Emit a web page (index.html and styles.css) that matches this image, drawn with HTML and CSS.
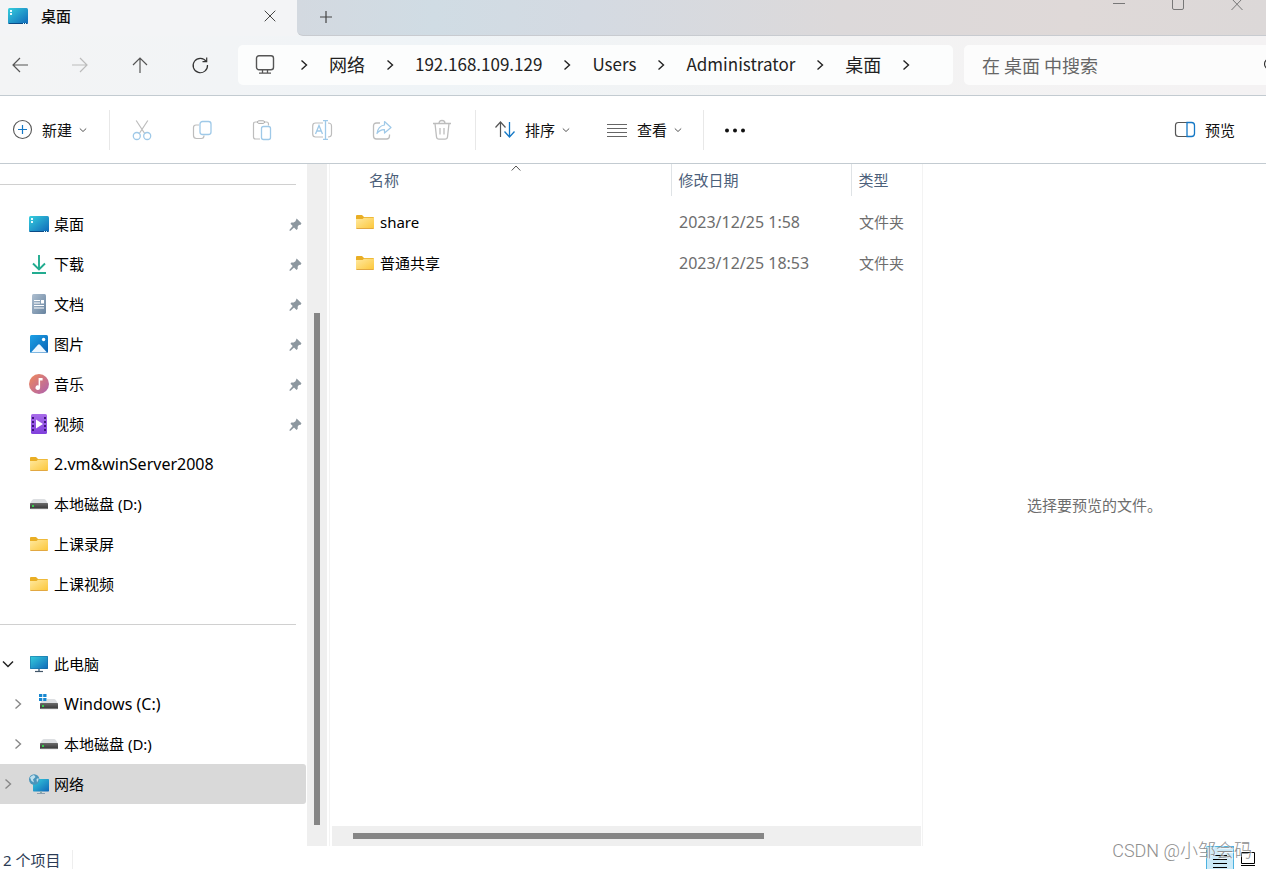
FILE: index.html
```html
<!DOCTYPE html>
<html lang="zh-CN">
<head>
<meta charset="utf-8">
<title>桌面</title>
<link rel="stylesheet" href="styles.css">
</head>
<body>
<svg class="defs" aria-hidden="true">
  <defs>
    <linearGradient id="g-desk" x1="0" y1="0" x2="1" y2="1"><stop offset="0" stop-color="#36cfdd"/><stop offset="1" stop-color="#0f67b9"/></linearGradient>
    <linearGradient id="g-doc" x1="0" y1="0" x2="1" y2="1"><stop offset="0" stop-color="#aebfd0"/><stop offset="1" stop-color="#67839f"/></linearGradient>
    <linearGradient id="g-pic" x1="0" y1="0" x2="1" y2="1"><stop offset="0" stop-color="#1da1e6"/><stop offset="1" stop-color="#0a62b4"/></linearGradient>
    <linearGradient id="g-music" x1="0" y1="0" x2="1" y2="1"><stop offset="0" stop-color="#f08a5a"/><stop offset="1" stop-color="#ac60b0"/></linearGradient>
    <linearGradient id="g-video" x1="0" y1="0" x2="0" y2="1"><stop offset="0" stop-color="#a86cea"/><stop offset="1" stop-color="#8040dc"/></linearGradient>
    <linearGradient id="g-folder" x1="0" y1="0" x2="1" y2="1"><stop offset="0" stop-color="#ffe9a0"/><stop offset="1" stop-color="#fcc638"/></linearGradient>
    <linearGradient id="g-disk" x1="0" y1="0" x2="0" y2="1"><stop offset="0" stop-color="#6a6a6a"/><stop offset="1" stop-color="#333"/></linearGradient>
  </defs>
  <symbol id="desktop" viewBox="0 0 20 20"><rect y="2" width="20" height="16" rx="1.5" fill="url(#g-desk)"/><path d="M.3 17h19.4q-.3 1-1.4 1H1.700q-1.100 0-1.400-1z" fill="#0b4a86"/><path d="M2 4h2v2H2zM2 7h2v2H2z" fill="#e8fbff"/><path d="M15 17h1v1h-1zM17 17h1v1h-1z" fill="#dff"/></symbol>
  <symbol id="download" viewBox="0 0 20 20"><path d="M10 1v14M4 9.500l6 6 6-6M3 19h14" fill="none" stroke="#22ac90" stroke-width="1.900"/></symbol>
  <symbol id="document" viewBox="0 0 20 20"><rect x="3" width="14" height="20" rx="1.500" fill="url(#g-doc)"/><path d="M5 6.500h6M5 9h6M5 11.500h10M5 14h10" stroke="#fff" stroke-width="1"/><path d="M12 6h3v3.500h-3z" fill="#fff"/></symbol>
  <symbol id="picture" viewBox="0 0 20 20"><rect x="1" y="1" width="18" height="18" rx="1.500" fill="url(#g-pic)"/><path d="M2 18.600l7-7.800q1-1 2 0l7 7.800z" fill="#edf7ff"/><circle cx="14.600" cy="5.500" r="1.700" fill="#fff"/></symbol>
  <symbol id="music" viewBox="0 0 20 20"><circle cx="10" cy="10" r="10" fill="url(#g-music)"/><path d="M9.600 4h4v2.500h-2.500v7.200a2.300 2.300 0 1 1-1.500-2.200z" fill="#fff"/></symbol>
  <symbol id="video" viewBox="0 0 20 20"><rect x="2" width="16" height="20" rx="1.500" fill="url(#g-video)"/><path d="M4 3v16M16 3v16" stroke="#40167c" stroke-width="2" stroke-dasharray="2 2"/><path d="M7 5.500v9l7-4.500z" fill="#fff"/></symbol>
  <symbol id="folder" viewBox="0 0 20 20"><path d="M1 4q0-1 1-1h5l2 2h9q1 0 1 1v3H1z" fill="#e9ae25"/><path d="M1 7h6.500L9 5.700h10V16q0 1-1 1H2q-1 0-1-1z" fill="url(#g-folder)"/><path d="M1.500 16.500h17" stroke="#e2a842"/></symbol>
  <symbol id="disk" viewBox="0 0 20 20"><path d="M1 10q2-5 4-5h10q2 0 4 5z" fill="#dcdee1"/><rect x="1" y="9" width="18" height="6" rx=".7" fill="url(#g-disk)"/><path d="M1.500 14.700h17" stroke="#999" stroke-width=".8"/><rect x="3" y="11" width="2" height="2" fill="#35d04a"/></symbol>
  <symbol id="windisk" viewBox="0 0 20 20"><path d="M1 10q2-5 4-5h10q2 0 4 5z" fill="#dcdee1"/><rect x="1" y="9" width="18" height="6" rx=".7" fill="url(#g-disk)"/><path d="M1.500 14.700h17" stroke="#999" stroke-width=".8"/><rect x="3" y="11" width="2" height="2" fill="#35d04a"/><path d="M0 0h8v7H0z" fill="#fff"/><path d="M0 0h3.300v3H0zM4.200 0h3.300v3H4.200zM0 4h3.300v3H0zM4.200 4h3.300v3H4.200z" fill="#1787d0"/></symbol>
  <symbol id="computer" viewBox="0 0 20 20"><rect x="1" y="2" width="18" height="13" rx=".7" fill="url(#g-desk)"/><rect x="1.500" y="2.500" width="17" height="12" fill="none" stroke="#176a9e" stroke-opacity=".5"/><path d="M9 15h2v2.500H9z" fill="#7892a5"/><path d="M6 17.500h8" stroke="#435668" stroke-width="1.200"/></symbol>
  <symbol id="network" viewBox="0 0 20 20"><rect x="4" y="5" width="16" height="12.500" rx=".7" fill="url(#g-desk)"/><path d="M11 17.500h2v2h-2z" fill="#8aa"/><path d="M8 19.500h8" stroke="#8b9fb0"/><circle cx="5.200" cy="5.500" r="5.200" fill="#4a95bb"/><path d="M1 3.500q2-2.500 4-2.500L6.500 3 4 5.500 5 8.500 2.500 7zM7.500 5l2-1q.6 2-1.500 4.500z" fill="#bfe0ee"/></symbol>
  <symbol id="pin" viewBox="0 0 14 14"><path d="M8.200.6l5.200 5-.8 1.700-2 .3-1.300 1.800.1 2.300-1.300 1.200-2.700-2.700L1.700 13.600.500 13.700l.1-1.100L4 8.700 1.600 6.200l1-1.400 2.400.100L7 3.400z" fill="#8c979f"/></symbol>
  <symbol id="chev-r" viewBox="0 0 10 12"><path d="M2.500 1.500L7.500 6l-5 4.500" fill="none" stroke="currentColor" stroke-width="1.400"/></symbol>
  <symbol id="chev-d" viewBox="0 0 12 12"><path d="M1 3.500l5 5 5-5" fill="none" stroke="currentColor" stroke-width="1.500"/></symbol>
  <symbol id="chev-s" viewBox="0 0 8 8"><path d="M.8 2.500L4 5.500l3.200-3" fill="none" stroke="#555" stroke-width="1"/></symbol>
</svg>

<div class="window">
  <header class="chrome">
    <div class="tabs">
      <div class="tab">
        <svg class="ic"><use href="#desktop"/></svg>
        <span class="tab-title">桌面</span>
        <button class="plain" aria-label="关闭标签页"><svg width="12" height="12" viewBox="0 0 12 12"><path d="M.7.700l10.600 10.600M11.300.700L.700 11.300" stroke="#444" stroke-width="1"/></svg></button>
      </div>
      <div class="strip">
        <button class="plain" aria-label="新建标签页"><svg width="14" height="14" viewBox="0 0 14 14"><path d="M7 1v12M1 7h12" stroke="#444" stroke-width="1.200"/></svg></button>
        <div class="caption">
          <button class="plain" aria-label="最小化"><svg width="12" height="11" viewBox="0 0 12 11"><path d="M0 3.500h12" stroke="#777"/></svg></button>
          <button class="plain" aria-label="最大化"><svg width="12" height="11" viewBox="0 0 12 11"><path d="M.5 0v8q0 1.500 1.500 1.500h8q1.500 0 1.500-1.500V0" fill="none" stroke="#777"/></svg></button>
          <button class="plain" aria-label="关闭"><svg width="12" height="11" viewBox="0 0 12 11"><path d="M.5-1.500l11 11.500M11.500-1.500L.5 10" stroke="#777"/></svg></button>
        </div>
      </div>
    </div>
    <div class="navbar">
      <div class="history">
        <button class="plain" aria-label="后退"><svg width="16" height="16" viewBox="0 0 16 16"><path d="M16 8H1M8 1L1 8l7 7" fill="none" stroke="#555" stroke-width="1.200"/></svg></button>
        <button class="plain" aria-label="前进"><svg width="16" height="16" viewBox="0 0 16 16"><path d="M0 8h15M8 1l7 7-7 7" fill="none" stroke="#bbb" stroke-width="1.200"/></svg></button>
        <button class="plain" aria-label="向上"><svg width="16" height="16" viewBox="0 0 16 16"><path d="M8 16V1M1 8l7-7 7 7" fill="none" stroke="#555" stroke-width="1.200"/></svg></button>
        <button class="plain" aria-label="刷新"><svg width="16" height="16" viewBox="0 0 16 16"><path d="M14.300 4.500A7.200 7.200 0 1 0 15.500 8M14.700.500V4.700H10.500" fill="none" stroke="#333" stroke-width="1.200"/></svg></button>
      </div>
      <nav class="address" aria-label="地址栏">
        <svg class="monitor" viewBox="0 0 20 20"><rect x="1.500" y=".7" width="17" height="14" rx="2.500" fill="none" stroke="#555" stroke-width="1.400"/><path d="M7.500 15v3M12.500 15v3M4 18.200h12" stroke="#555" stroke-width="1.300"/></svg>
        <svg class="sep"><use href="#chev-r"/></svg><a class="han" href="#">网络</a>
        <svg class="sep"><use href="#chev-r"/></svg><a href="#">192.168.109.129</a>
        <svg class="sep"><use href="#chev-r"/></svg><a href="#">Users</a>
        <svg class="sep"><use href="#chev-r"/></svg><a href="#">Administrator</a>
        <svg class="sep"><use href="#chev-r"/></svg><a class="han" href="#">桌面</a>
        <svg class="sep"><use href="#chev-r"/></svg>
      </nav>
      <div class="search">
        <input type="text" aria-label="搜索" placeholder="在 桌面 中搜索">
        <svg width="14" height="14" viewBox="0 0 14 14"><circle cx="5.500" cy="6" r="5" fill="none" stroke="#333" stroke-width="1.200"/></svg>
      </div>
    </div>
  </header>

  <div class="toolbar">
    <button class="cmd new"><svg class="ic" viewBox="0 0 20 20"><circle cx="10.500" cy="9.500" r="9" fill="none" stroke="#555" stroke-width="1.100"/><path d="M10.500 5v9M6 9.500h9" stroke="#1478c6" stroke-width="1.200"/></svg>新建<svg class="drop"><use href="#chev-s"/></svg></button>
    <span class="rule"></span>
    <div class="edit">
      <button class="plain" aria-label="剪切"><svg class="ic" viewBox="0 0 20 20"><path d="M4.200 0.500l8.800 13.500M15.800.500L7 14" stroke="#bdbdbd" stroke-width="1.200"/><g fill="none" stroke="#9fc9e8" stroke-width="1.300"><circle cx="4.800" cy="16" r="3.500"/><circle cx="15.200" cy="16" r="3.500"/></g></svg></button>
      <button class="plain" aria-label="复制"><svg class="ic" viewBox="0 0 20 20"><path d="M7 5H4Q1.500 5 1.500 7.500v8q0 3 3 3h5q2.500 0 2.500-3" fill="none" stroke="#bdbdbd" stroke-width="1.200"/><rect x="8" y="1.500" width="11" height="13" rx="2.500" fill="none" stroke="#9fc9e8" stroke-width="1.300"/></svg></button>
      <button class="plain" aria-label="粘贴"><svg class="ic" viewBox="0 0 20 20"><path d="M8 19H3.500Q1.500 19 1.500 17V4Q1.500 2 3.500 2H6M12 2h2.500q2 0 2 2v1.500" fill="none" stroke="#bdbdbd" stroke-width="1.200"/><rect x="5.500" y=".8" width="7" height="2.600" rx="1.300" fill="none" stroke="#aaa"/><rect x="9.500" y="6.500" width="9" height="13" rx="2" fill="#fff" stroke="#9fc9e8" stroke-width="1.300"/></svg></button>
      <button class="plain" aria-label="重命名"><svg class="ic" viewBox="0 0 20 20"><path d="M11 3H3.500Q.700 3 .700 6v8q0 3 2.800 3H11M16 3q3.500 0 3.500 3v8q0 3-3.500 3" fill="none" stroke="#bdbdbd" stroke-width="1.200"/><path d="M3.500 14L7 5.500l3.500 8.500M4.700 11h4.600M13.500 1v18M11 .700h5M11 19.300h5" fill="none" stroke="#9fc9e8" stroke-width="1.300"/></svg></button>
      <button class="plain" aria-label="共享"><svg class="ic" viewBox="0 0 20 20"><path d="M8 3H4.500Q1.500 3 1.500 6v10q0 3 3 3h10q3 0 3-3v-1.500" fill="none" stroke="#bdbdbd" stroke-width="1.300"/><path d="M12.500 1.500L19 7.500l-6.500 5.500V9.700Q8 9.500 5 13.500 6 6 12.500 5z" fill="none" stroke="#9fc9e8" stroke-width="1.200" stroke-linejoin="round"/></svg></button>
      <button class="plain" aria-label="删除"><svg class="ic" viewBox="0 0 20 20"><path d="M1 3.500h18M3 3.500l1.500 13.500q.3 2.200 2.500 2.200h6q2.200 0 2.500-2.200L17 3.500M7 3.500q0-3 3-3t3 3M8 8v6.500M12 8v6.500" fill="none" stroke="#bdbdbd" stroke-width="1.300"/></svg></button>
    </div>
    <span class="rule"></span>
    <button class="cmd"><svg class="ic" viewBox="0 0 20 20"><path d="M5.500 17V2M.5 7.500l5-5.500 5 5.500" fill="none" stroke="#555" stroke-width="1.200"/><path d="M14.500 2v15M9.500 11.500l5 5.500 5-5.500" fill="none" stroke="#1478c6" stroke-width="1.300"/></svg>排序<svg class="drop"><use href="#chev-s"/></svg></button>
    <button class="cmd"><svg class="ic" viewBox="0 0 20 20"><path d="M0 4.500h20M0 8.500h20M0 12.500h20M0 16.500h20" stroke="#666"/></svg>查看<svg class="drop"><use href="#chev-s"/></svg></button>
    <span class="rule"></span>
    <button class="plain more" aria-label="更多"><svg class="ic" viewBox="0 0 20 20"><g fill="#111"><circle cx="2" cy="10.500" r="2"/><circle cx="10" cy="10.500" r="2"/><circle cx="18" cy="10.500" r="2"/></g></svg></button>
    <button class="cmd preview-btn"><svg class="ic" viewBox="0 0 20 20"><path d="M12 2.500H3.500q-3 0-3 3v8q0 3 3 3H12" fill="none" stroke="#555" stroke-width="1.200"/><path d="M12 2.500h4.500q3 0 3 3v8q0 3-3 3H12z" fill="none" stroke="#1478c6" stroke-width="1.300"/></svg>预览</button>
  </div>

  <main class="panes">
    <nav class="tree" aria-label="导航窗格">
      <hr>
      <a class="node" href="#"><svg class="ic"><use href="#desktop"/></svg>桌面<svg class="pin"><use href="#pin"/></svg></a>
      <a class="node" href="#"><svg class="ic"><use href="#download"/></svg>下载<svg class="pin"><use href="#pin"/></svg></a>
      <a class="node" href="#"><svg class="ic"><use href="#document"/></svg>文档<svg class="pin"><use href="#pin"/></svg></a>
      <a class="node" href="#"><svg class="ic"><use href="#picture"/></svg>图片<svg class="pin"><use href="#pin"/></svg></a>
      <a class="node" href="#"><svg class="ic"><use href="#music"/></svg>音乐<svg class="pin"><use href="#pin"/></svg></a>
      <a class="node" href="#"><svg class="ic"><use href="#video"/></svg>视频<svg class="pin"><use href="#pin"/></svg></a>
      <a class="node latin" href="#"><svg class="ic"><use href="#folder"/></svg>2.vm&amp;winServer2008</a>
      <a class="node" href="#"><svg class="ic"><use href="#disk"/></svg>本地磁盘 (D:)</a>
      <a class="node" href="#"><svg class="ic"><use href="#folder"/></svg>上课录屏</a>
      <a class="node" href="#"><svg class="ic"><use href="#folder"/></svg>上课视频</a>
      <hr>
      <a class="node branch" href="#"><svg class="twist open"><use href="#chev-d"/></svg><svg class="ic"><use href="#computer"/></svg>此电脑</a>
      <a class="node branch child latin" href="#"><svg class="twist"><use href="#chev-r"/></svg><svg class="ic"><use href="#windisk"/></svg>Windows (C:)</a>
      <a class="node branch child" href="#"><svg class="twist"><use href="#chev-r"/></svg><svg class="ic"><use href="#disk"/></svg>本地磁盘 (D:)</a>
      <a class="node branch current" href="#"><svg class="twist"><use href="#chev-r"/></svg><svg class="ic"><use href="#network"/></svg>网络</a>
    </nav>
    <div class="vbar"><div class="vthumb"></div></div>
    <section class="files">
      <table>
        <colgroup><col class="c-name"><col class="c-date"><col></colgroup>
        <thead><tr><th class="name-head">名称<svg class="sort" width="10" height="6" viewBox="0 0 10 6"><path d="M.7 5.500L5 1l4.300 4.500" fill="none" stroke="#555"/></svg></th><th>修改日期</th><th>类型</th></tr></thead>
        <tbody>
          <tr><td><a class="file" href="#"><svg class="ic"><use href="#folder"/></svg>share</a></td><td class="latin">2023/12/25 1:58</td><td>文件夹</td></tr>
          <tr><td><a class="file" href="#"><svg class="ic"><use href="#folder"/></svg>普通共享</a></td><td class="latin">2023/12/25 18:53</td><td>文件夹</td></tr>
        </tbody>
      </table>
      <div class="hbar"><div class="hthumb"></div></div>
    </section>
    <aside class="preview">选择要预览的文件。</aside>
  </main>

  <footer class="status">
    <span class="count">2 个项目</span>
    <div class="views">
      <button class="view on" aria-label="详细信息"><svg width="16" height="20" viewBox="0 0 16 20"><path d="M1 8.500h14M1 12.500h14M1 16.500h14M1 20.500h14" stroke="#000"/></svg></button>
      <button class="view" aria-label="大图标"><svg width="16" height="20" viewBox="0 0 16 20"><path d="M1.500 6.500h13v11h-13zM1 19.500h14" fill="none" stroke="#000"/></svg></button>
      <span class="watermark">CSDN @小邹会码</span>
    </div>
  </footer>
</div>
</body>
</html>
```

FILE: styles.css
```css
* { box-sizing: border-box; }

body {
  margin: 0;
  background: #fff;
  color: #111;
  font: 15px/20px "Noto Sans", "Noto Sans CJK SC", sans-serif;
}

a { color: inherit; text-decoration: none; }

button {
  border: 0;
  background: none;
  color: inherit;
  font: inherit;
  padding: 0;
}

svg { display: block; flex: none; overflow: visible; }

.defs { position: absolute; width: 0; height: 0; }
.ic { width: 20px; height: 20px; }
.plain { display: flex; align-items: center; justify-content: center; }
.latin { font-size: 16px; }

.window {
  display: flex;
  flex-direction: column;
  height: 100vh;
  overflow: hidden;
}

/* Title bar and address row */
.chrome {
  background: linear-gradient(90deg, #f3f4f5 0%, #f2f4f6 18%, #eff4f7 34%, #f3f3f3 65%, #f4f2f3 100%);
  border-bottom: 1px solid #c3cbd1;
}

.tabs { display: flex; height: 36px; }

.tab {
  display: flex;
  align-items: center;
  width: 297px;
  padding: 0 21px 4px 8px;
  gap: 13px;
  background: #f3f4f6;
}

.tab-title { flex: 1; font-weight: 500; }

.strip {
  display: flex;
  flex: 1;
  align-items: center;
  justify-content: space-between;
  padding: 0 23px 2px 22px;
  border-bottom: 1px solid #c8cbd0;
  border-bottom-left-radius: 6px;
  background: linear-gradient(90deg, #d3d9e0 0%, #d0dce4 14%, #d4dae2 30%, #dcd9da 56%, #dfd9d8 80%, #dcd8d8 100%);
}

.caption { display: flex; align-self: flex-start; gap: 47px; }

.navbar { display: flex; align-items: center; height: 59px; padding-bottom: 1px; }
.history { display: flex; gap: 20px; }
.history .plain { width: 40px; height: 40px; }

.address {
  display: flex;
  flex: 1;
  align-items: center;
  height: 40px;
  margin: 0 11px 0 18px;
  padding-left: 17px;
  border-radius: 5px;
  background: #fcfdfd;
  color: #222;
  font: 17px/24px "Noto Sans CJK SC", sans-serif;
  white-space: nowrap;
}

.address a { padding-bottom: 2px; }
.han { font-size: 18px; }
.monitor { width: 20px; height: 20px; margin-right: 4px; }
.sep { width: 10px; height: 12px; margin: 0 20px; }

.search {
  display: flex;
  align-items: center;
  width: 302px;
  height: 40px;
  padding-left: 18px;
  border-radius: 5px 0 0 5px;
  background: #fcfcfc;
  overflow: hidden;
}

.search input {
  flex: none;
  width: 282px;
  padding: 0;
  border: 0;
  outline: 0;
  background: none;
  font: 18px/24px "Noto Sans CJK SC", sans-serif;
}

.search input::placeholder { color: #666; opacity: 1; }

/* Command bar */
.toolbar {
  display: flex;
  align-items: center;
  height: 68px;
  border-bottom: 1px solid #c3cbd1;
}

.cmd { display: flex; align-items: center; gap: 10px; width: 112px; padding-left: 19px; }
.new { width: 109px; padding-left: 12px; }
.drop { width: 8px; height: 8px; }
.cmd .drop { margin-left: -3px; }
.rule { width: 1px; height: 40px; background: #e8e8e8; }
.edit { display: flex; margin: 0 3px 0 2px; }
.edit .plain { width: 60px; height: 40px; }
.cmd + .rule { margin-left: 3px; }
.new + .rule { margin-left: 0; }
.more { margin-left: 21px; }
.preview-btn { width: auto; margin-left: auto; padding: 0 31px 0 0; }

/* Panes */
.panes { display: flex; flex: 1; min-height: 0; }
.tree { width: 307px; padding-right: 1px; overflow: hidden; }

.tree hr {
  height: 1px;
  margin: 20px 10px 19px 0;
  border: 0;
  background: #d0d0d0;
}

.node {
  display: flex;
  align-items: center;
  gap: 5px;
  height: 40px;
  padding: 0 4px 0 29px;
  color: #000;
}

.pin { width: 13px; height: 13px; margin-left: auto; }
.branch { padding-left: 0; }
.child { padding-left: 10px; }
.current { border-radius: 0 3px 3px 0; background: #d9d9d9; }
.twist { width: 10px; height: 12px; margin: 0 11px 0 3px; color: #888; }
.open { width: 12px; margin: 0 10px 0 2px; color: #222; }

.vbar { width: 20px; padding: 149px 7px 21px; background: #efefef; }
.vthumb { height: 100%; background: #868686; }

.files {
  display: flex;
  flex-direction: column;
  width: 594px;
  margin-left: 2px;
  padding: 0 1px 0 2px;
  border: solid #f3f3f3;
  border-width: 0 1px;
}

table { width: 100%; border-collapse: collapse; table-layout: fixed; }
.c-name { width: 339px; }
.c-date { width: 180px; }

th {
  height: 32px;
  padding: 0 0 0 7px;
  border-left: 1px solid #dfe3e6;
  color: #4c607a;
  font-weight: 400;
  text-align: left;
}

.name-head { position: relative; padding-left: 37px; border-left: 0; }
.sort { position: absolute; top: 1px; left: 50%; margin-left: 10px; }
tbody::before { content: ""; display: block; height: 5px; }
td { height: 41px; padding: 0 0 0 8px; color: #6d6d6d; }
td:first-child { padding-left: 23px; }
.file { display: flex; align-items: center; gap: 5px; color: #000; }

.hbar { height: 20px; margin-top: auto; padding: 7px 157px 7px 21px; background: #efefef; }
.hthumb { height: 6px; background: #868686; }

.preview {
  display: flex;
  flex: 1;
  align-items: center;
  justify-content: center;
  color: #6d6d6d;
}

/* Status bar */
.status {
  display: flex;
  align-items: flex-start;
  justify-content: space-between;
  height: 23px;
  padding: 0 4px 0 3px;
  color: #2b3b55;
}

.count { margin-top: 4px; padding-right: 12px; border-right: 1px solid #eee; }
.views { position: relative; display: flex; }
.view { display: flex; justify-content: center; width: 28px; height: 24px; }
.on { border: 1px solid #4db2e0; border-bottom: 0; background: #cbeaf8; }

.watermark {
  position: absolute;
  right: 10px;
  bottom: 7px;
  color: #8f8f8f;
  font: 18px/24px Roboto, "Noto Sans CJK SC", sans-serif;
  font-weight: 300;
  text-shadow: 1px 1px 1px #fff;
  white-space: nowrap;
}
```
